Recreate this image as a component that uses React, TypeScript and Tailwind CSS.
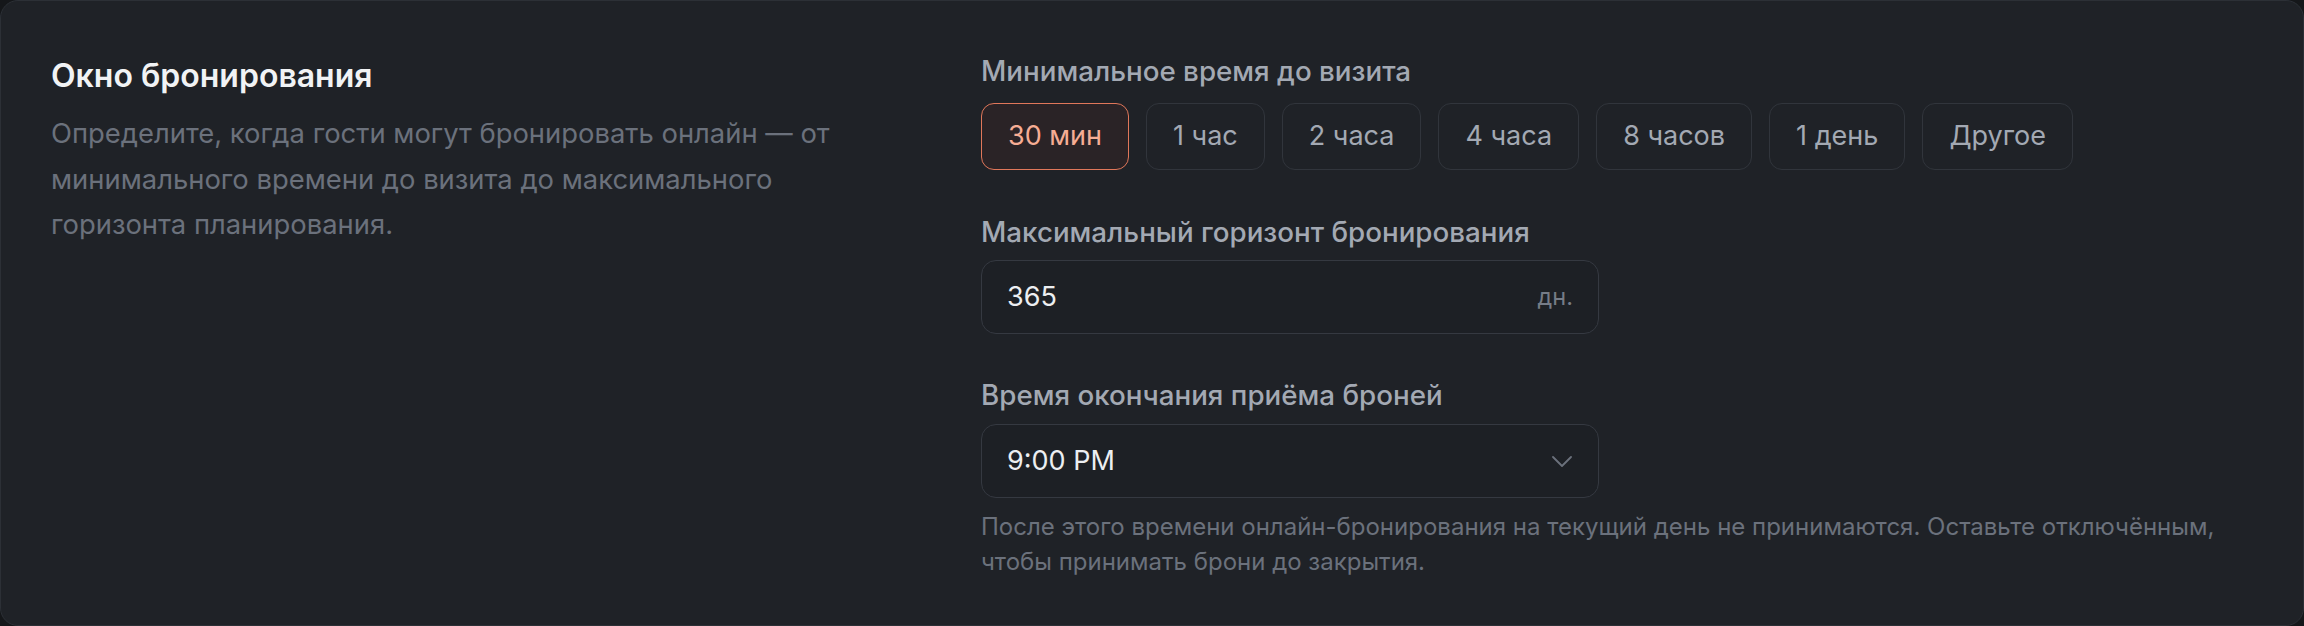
import React from "react";

const options = ["30 мин", "1 час", "2 часа", "4 часа", "8 часов", "1 день", "Другое"];

export default function App() {
  return (
    <div className="min-h-[626px] w-full bg-[#15171a] font-['Inter','Noto_Sans',sans-serif] antialiased">
      <div className="h-[626px] w-full rounded-[18px] border-[1.5px] border-[#2c3036] bg-[#1f2227] px-[50px] pt-[50px]">
        <div className="grid grid-cols-[850px_1fr] gap-x-[80px]">
          <div>
            <h2 className="text-[32px] leading-[50px] font-semibold text-[#f1f3f5]">
              Окно бронирования
            </h2>
            <p className="mt-[10px] text-[27.4px] leading-[45.5px] text-[#6b717c]">
              Определите, когда гости могут бронировать онлайн — от минимального времени до визита до максимального горизонта планирования.
            </p>
          </div>

          <div>
            <div className="text-[27.75px] leading-[40px] font-medium text-[#a3a9b3]">Минимальное время до визита</div>
            <div className="mt-[12px] flex gap-[17px]">
              {options.map((o, i) => (
                <button
                  key={o}
                  className={
                    i === 0
                      ? "h-[67px] rounded-[13px] border-[1.5px] border-[#e0775a] bg-[#2a2326] px-[26px] text-[27px] text-[#f6ad94]"
                      : "h-[67px] rounded-[13px] border-[1.5px] border-[#31353c] bg-[#1f2227] px-[26px] text-[27px] text-[#a3a9b3]"
                  }
                >
                  {o}
                </button>
              ))}
            </div>

            <div className="mt-[42px] text-[27.75px] leading-[40px] font-medium text-[#a3a9b3]">Максимальный горизонт бронирования</div>
            <div className="mt-[8px] flex h-[74px] w-[618px] items-center justify-between rounded-[15px] border-[1.5px] border-[#353941] bg-[#1d2025] px-[25px]">
              <span className="text-[27px] text-[#eceef1]">365</span>
              <span className="text-[23.5px] text-[#767c87]">дн.</span>
            </div>

            <div className="mt-[41px] text-[27.75px] leading-[40px] font-medium text-[#a3a9b3]">Время окончания приёма броней</div>
            <div className="mt-[9px] flex h-[74px] w-[618px] items-center justify-between rounded-[15px] border-[1.5px] border-[#353941] bg-[#1d2025] pl-[25px] pr-[26px]">
              <span className="text-[27px] text-[#eceef1]">9:00 PM</span>
              <svg width="20" height="11" viewBox="0 0 20 11" fill="none">
                <path d="M1 1l9 9 9-9" stroke="#6b717c" strokeWidth="1.8" strokeLinecap="round" strokeLinejoin="round" />
              </svg>
            </div>
            <p className="mt-[11px] text-[24px] leading-[35px] text-[#6b717c]">
              После этого времени онлайн-бронирования на текущий день не принимаются. Оставьте отключённым, чтобы принимать брони до закрытия.
            </p>
          </div>
        </div>
      </div>
    </div>
  );
}
